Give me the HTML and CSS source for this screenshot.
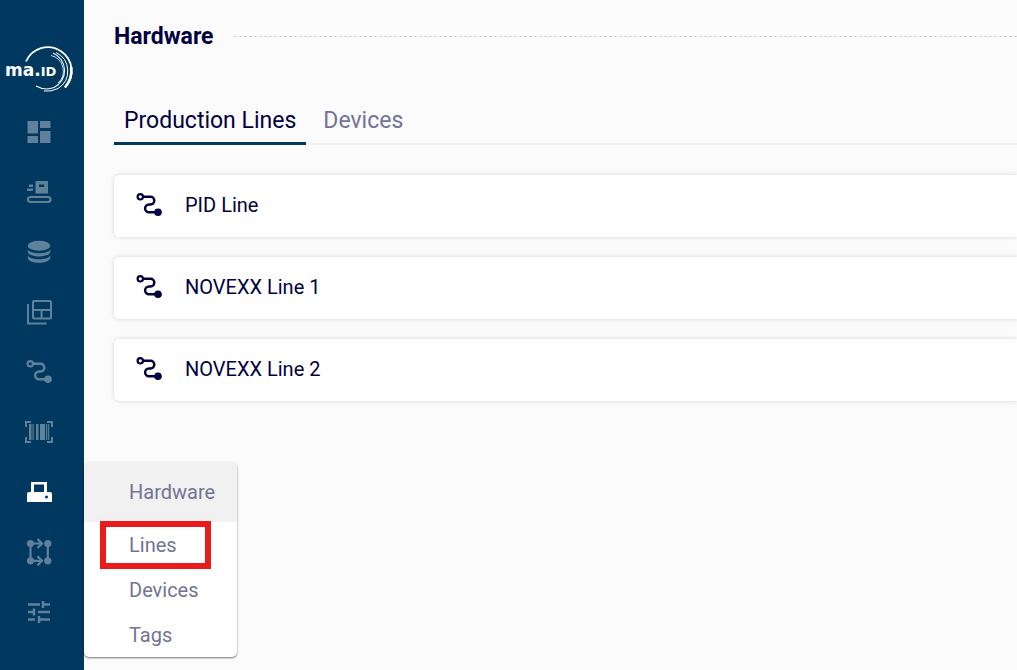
FILE: index.html
```html
<!DOCTYPE html>
<html lang="en">
<head>
<meta charset="utf-8">
<meta name="viewport" content="width=device-width, initial-scale=1">
<title>Hardware</title>
<link rel="stylesheet" href="styles.css">
</head>
<body>
<svg class="defs" aria-hidden="true">
  <symbol id="route" viewBox="0 0 28 28">
    <circle cx="5.300" cy="5.800" r="2.700" fill="none" stroke="currentColor" stroke-width="2.200"/>
    <path d="M8 5.800h7.500a3.800 3.800 0 0 1 0 7.600h-1.500a3.900 3.900 0 0 0 0 7.800h8" fill="none" stroke="currentColor" stroke-width="2.500"/>
    <circle cx="23" cy="21.200" r="3.800" fill="currentColor"/>
  </symbol>
</svg>
<div class="app">
  <aside class="sidebar">
    <a class="logo" href="#" aria-label="ma.ID">
      <svg width="78" height="56" viewBox="0 0 78 56">
        <g fill="none" stroke="#fff">
          <path d="M26 21.500A23.800 23.800 0 1 1 65 47.500" stroke-width="1.800"/>
          <path d="M71.200 27Q72.500 38.500 65 47.500" stroke-width="2.600"/>
          <path d="M53 13A19 19 0 0 1 54 47.500Q45 51 36 46" stroke-width="1.100"/>
          <path d="M56 12.500A20.500 20.500 0 0 1 58 48.500Q51 52 44 51" stroke-width="1"/>
          <path d="M51 15.500A16 16 0 0 1 58 43" stroke-width=".8"/>
        </g>
        <text class="logo-text" x="5" y="36">ma.<tspan class="logo-small">ID</tspan></text>
      </svg>
    </a>
    <nav aria-label="Main">
      <ul class="nav">
        <li class="nav-item"><a class="nav-link" href="#" aria-label="Dashboard"><svg class="icon" viewBox="0 0 28 28"><path d="M2.500 3H13v12.500H2.500zM2.500 18H13v7H2.500zM15 3h10.500v7H15zM15 13h10.500v12H15z"/></svg></a></li>
        <li class="nav-item"><a class="nav-link" href="#" aria-label="Production"><svg class="icon" viewBox="0 0 28 28"><path fill-rule="evenodd" d="M10.500 3H23v12.500H10.500zM14 6.500v2.500h5.200v-2.500zM4 6.500h4V9H4zM2 10.500h6V13H2z"/><rect x="3" y="19" width="22.500" height="5" rx="2.500" fill="none" stroke="currentColor" stroke-width="2.200"/></svg></a></li>
        <li class="nav-item"><a class="nav-link" href="#" aria-label="Data"><svg class="icon" viewBox="0 0 28 28"><ellipse cx="14" cy="7.800" rx="11.300" ry="5"/><path d="M2.700 11.500C5 16.500 23 16.500 25.300 11.500V13.500C25.300 20 2.700 20 2.700 13.500zM2.700 17.500C5 22.500 23 22.500 25.300 17.500V19.500C25.300 26.500 2.700 26.500 2.700 19.500z"/></svg></a></li>
        <li class="nav-item"><a class="nav-link" href="#" aria-label="Layouts"><svg class="icon" viewBox="0 0 28 28"><g fill="none" stroke="currentColor" stroke-width="2"><rect x="8" y="3" width="18" height="17.500" rx="1"/><path d="M8 12h18M16.500 12v8.500M3 6v19.500h18.500"/></g></svg></a></li>
        <li class="nav-item"><a class="nav-link" href="#" aria-label="Routes"><svg class="icon"><use href="#route"/></svg></a></li>
        <li class="nav-item"><a class="nav-link" href="#" aria-label="Barcodes"><svg class="icon" viewBox="0 0 28 28"><path d="M0 3h6v2H2v4H0zM22 3h6v6h-2V5h-4zM0 19h2v4h4v2H0zM26 19h2v6h-6v-2h4zM4 6h2.500v16H4zM7.500 6h1.200v16H7.500zM11 6h2.500v16H11zM15 6h5v16h-5zM21 6h1.200v16H21zM23.200 6h1v16h-1z"/></svg></a></li>
        <li class="nav-item active">
          <a class="nav-link" href="#" aria-label="Hardware" aria-current="page"><svg class="icon" viewBox="0 0 28 28"><path fill-rule="evenodd" d="M6 4h16v10h3q2 0 2 2v8H2v-8q0-2 2-2h2zM9 6.500V14h10V6.500zM21.500 17.500a1.500 1.500 0 1 0 .01 0z"/></svg></a>
          <div class="submenu">
            <a class="submenu-title" href="#">Hardware</a>
            <a class="submenu-link highlighted" href="#">Lines</a>
            <a class="submenu-link" href="#">Devices</a>
            <a class="submenu-link" href="#">Tags</a>
          </div>
        </li>
        <li class="nav-item"><a class="nav-link" href="#" aria-label="Processes"><svg class="icon" viewBox="0 0 28 28"><circle cx="5.500" cy="5.500" r="3.600"/><circle cx="22.800" cy="5.500" r="3.600"/><circle cx="5.500" cy="22.800" r="3.600"/><circle cx="22.800" cy="22.800" r="3.600"/><path d="M5.500 5.500v17.300M22.800 5.500v17.300M5.500 5.500h11M5.500 22.800h11M12.500 1l4.500 4.500-4.500 4.500M12.500 18.300l4.500 4.500-4.500 4.500" fill="none" stroke="currentColor" stroke-width="2.200"/></svg></a></li>
        <li class="nav-item"><a class="nav-link" href="#" aria-label="Settings"><svg class="icon" viewBox="0 0 28 28"><path d="M3 6.500h12M18 3v7M18 6.500h7M3 14h6M9 10.500v7M13 14h12M3 21.500h7M14 18v7M14 21.500h11" fill="none" stroke="currentColor" stroke-width="2.500"/></svg></a></li>
      </ul>
    </nav>
  </aside>
  <main class="content">
    <header class="page-header"><h1>Hardware</h1></header>
    <div class="tabs" role="tablist">
      <button class="tab selected" role="tab" aria-selected="true">Production Lines</button>
      <button class="tab" role="tab" aria-selected="false">Devices</button>
    </div>
    <ul class="lines">
      <li class="line"><svg class="icon"><use href="#route"/></svg><span>PID Line</span></li>
      <li class="line"><svg class="icon"><use href="#route"/></svg><span>NOVEXX Line 1</span></li>
      <li class="line"><svg class="icon"><use href="#route"/></svg><span>NOVEXX Line 2</span></li>
    </ul>
  </main>
</div>
</body>
</html>
```
FILE: styles.css
```css
* { box-sizing: border-box; }
body {
  margin: 0;
  background: #fbfbfb;
  color: #000040;
  font: 20px/24px Roboto, sans-serif;
}
a { color: inherit; text-decoration: none; }
ul { margin: 0; padding: 0; list-style: none; }
.defs { position: absolute; width: 0; height: 0; }
.icon { display: block; width: 28px; height: 28px; flex: none; fill: currentColor; }

.app { display: flex; min-height: 100vh; }
.sidebar {
  flex: none;
  width: 84px;
  padding-top: 40px;
  background: #00385f;
}
.logo { display: block; height: 62px; }
.logo svg { display: block; }
.logo-text { font: 700 17px "DejaVu Sans", sans-serif; fill: #fff; }
.logo-small { font-size: 13px; }

.nav-item { position: relative; height: 60px; }
.nav-link {
  display: flex;
  align-items: center;
  justify-content: center;
  height: 100%;
  padding-right: 6px;
  color: #5f819a;
}
.active .nav-link { color: #fff; }

.submenu {
  position: absolute;
  top: 0;
  left: 100%;
  z-index: 1;
  width: 153px;
  border-radius: 5px;
  overflow: hidden;
  background: #fff;
  color: #737395;
  box-shadow: 0 1px 2px rgba(0, 0, 0, .55);
}
.submenu-title, .submenu-link {
  display: flex;
  align-items: center;
  height: 45px;
  padding-left: 45px;
}
.submenu-title { height: 60px; background: #f1f1f1; }
.highlighted { position: relative; }
.highlighted::before {
  content: "";
  position: absolute;
  inset: -1px 26px -2px 16px;
  border: 6px solid #e91b1b;
}

.content { flex: 1; min-width: 0; padding: 22px 0 0 30px; }
.page-header { display: flex; align-items: center; gap: 20px; }
.page-header::after {
  content: "";
  flex: 1;
  height: 1px;
  background: repeating-linear-gradient(90deg, #d0d0e0 0 3px, transparent 3px 5px);
}
h1 { margin: 0; padding-top: 2px; font-size: 23px; line-height: 26px; font-weight: 700; }

.tabs {
  display: flex;
  margin-top: 45px;
  box-shadow: inset 0 -2px #f2f2f2;
}
.tab {
  height: 50px;
  padding: 4px 10px 0;
  border: 0;
  border-bottom: 3px solid transparent;
  background: none;
  color: #737395;
  font: 23px/28px Roboto, sans-serif;
}
.tab.selected { margin-right: 7px; border-color: #00385f; color: #000040; }

.lines { display: grid; gap: 20px; padding-top: 30px; }
.line {
  display: flex;
  align-items: center;
  gap: 22px;
  height: 62px;
  padding: 0 0 2px 21px;
  border-radius: 5px 0 0 5px;
  background: #fff;
  box-shadow: 0 0 4px rgba(0, 0, 0, .16);
}
```
